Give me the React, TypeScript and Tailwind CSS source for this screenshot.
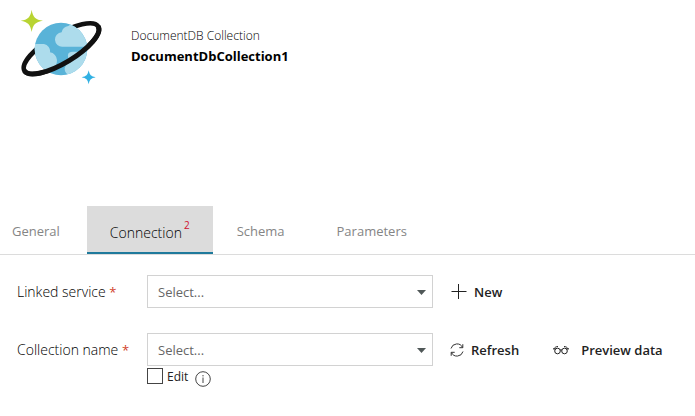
import type { ReactNode } from "react";

function CosmosLogo() {
  return (
    <svg width="100" height="95" viewBox="0 0 300 285" aria-hidden="true">
      <defs>
        <clipPath id="planet">
          <circle cx="153" cy="147" r="79" />
        </clipPath>
      </defs>
      <ellipse cx="154" cy="146" rx="129" ry="43" transform="rotate(-31 154 146)" fill="none" stroke="#111" strokeWidth="14" />
      <circle cx="153" cy="147" r="79" fill="#59b3d8" />
      <g clipPath="url(#planet)" fill="#addcec">
        <path d="M158 140a21 21 0 0 1-3-43 24 24 0 0 1 20-19l20-14 50 30v46z" />
        <path d="M60 132h42a22 22 0 0 1 18 25 24 24 0 0 1 21 23c0 22-14 35-28 34H60z" />
        <path d="M174 164c1-7 7-9 14-9h50v70h-60c-12-4-14-12-14-20 2-10 8-16 18-17-6-8-9-14-8-24z" />
      </g>
      <path
        d="M25 146A129 43 0 0 0 283 146"
        transform="rotate(-31 154 146)"
        fill="none"
        stroke="#111"
        strokeWidth="15"
      />
      <path d="M65 29C69 52 76 59 99 62C76 66 69 73 65 96C61 73 54 66 32 62C54 59 61 52 65 29Z" fill="#b8d432" />
      <path d="M236 211C239 225 243 229 257 232C243 235 239 239 236 253C233 239 229 235 215 232C229 229 233 225 236 211Z" fill="#32b1e3" />
    </svg>
  );
}

function PlusIcon() {
  return (
    <svg width="16" height="16" viewBox="0 0 16 16" stroke="#222" fill="none" aria-hidden="true">
      <path d="M.5 7.5h15M7.5 0v15" />
    </svg>
  );
}

function RefreshIcon() {
  return (
    <svg width="14" height="14" viewBox="0 0 14 14" stroke="#333" fill="none" aria-hidden="true">
      <path d="M1 5.5A6.2 6.2 0 0 1 12.6 4.5M13 8.5A6.2 6.2 0 0 1 1.4 9.5M12.8 1.2v3.5H9.3M1.2 12.8V9.3h3.5" />
    </svg>
  );
}

function GlassesIcon() {
  return (
    <svg width="16" height="12" viewBox="0 0 16 12" stroke="#222" fill="none" aria-hidden="true">
      <circle cx="4.5" cy="7" r="2.8" />
      <circle cx="11.5" cy="7" r="2.8" />
      <path d="M7 6.2c.6-.5 1.4-.5 2 0M0 4.9h2.8M13.2 4.9H16M.9 4.8C1.8 3.4 3 2.6 5 2.5M15.1 4.8C14.2 3.4 13 2.6 11 2.5" />
    </svg>
  );
}

function InfoIcon() {
  return (
    <svg width="16" height="16" viewBox="0 0 16 16" fill="none" stroke="#444" role="img" aria-label="Info">
      <circle cx="8" cy="8" r="7.3" />
      <path d="M8 6.5V12M8 4v1.4" />
    </svg>
  );
}

function Tab({ className, selected = false, children }: { className: string; selected?: boolean; children: ReactNode }) {
  const look = selected
    ? "border-b-2 border-[#1f7a9c] bg-[#dcdcdc] pt-2 text-[14px] font-light text-black"
    : "pt-[2px] text-[#858585]";
  return (
    <button type="button" role="tab" aria-selected={selected} className={`flex h-12 items-center ${look} ${className}`}>
      {children}
    </button>
  );
}

function Label({ htmlFor, children }: { htmlFor: string; children: ReactNode }) {
  return (
    <label htmlFor={htmlFor} className="text-[14px] font-light whitespace-nowrap text-black">
      {children} <span className="text-[13px] font-normal text-[#d13f2a]">*</span>
    </label>
  );
}

function Select({ id }: { id: string }) {
  return (
    <div className="relative">
      <select id={id} className="block h-[33px] w-full appearance-none border border-[#d2d2d2] bg-white px-[10px] text-[#666] outline-none">
        <option>Select...</option>
      </select>
      <svg width="9" height="5" viewBox="0 0 9 5" className="pointer-events-none absolute top-[15px] right-[7px]" fill="#505858" aria-hidden="true">
        <path d="M0 0h9L4.5 5z" />
      </svg>
    </div>
  );
}

export default function App() {
  return (
    <main className="bg-white font-['Open_Sans','Noto_Sans',sans-serif] text-[13px] leading-5 text-[#222]">
      <header className="flex h-[206px] items-start pl-[10px]">
        <CosmosLogo />
        <div className="pt-[26px] pl-[21px]">
          <p className="text-[12px] font-light text-black">DocumentDB Collection</p>
          <h1 className="text-[13px] font-bold text-black">DocumentDbCollection1</h1>
        </div>
      </header>

      <div role="tablist" className="flex border-b border-[#dcdcdc]">
        <Tab className="pr-[27px] pl-3">General</Tab>
        <Tab className="px-[23px]" selected>
          Connection<sup className="-top-2 ml-[2px] text-[10px] font-normal text-[#d0102f]">2</sup>
        </Tab>
        <Tab className="px-6">Schema</Tab>
        <Tab className="px-7">Parameters</Tab>
      </div>

      <form className="grid grid-cols-[130px_minmax(0,286px)_auto] items-center pt-5 pl-[17px]">
        <Label htmlFor="linked-service">Linked service</Label>
        <Select id="linked-service" />
        <div className="flex pl-[18px] font-semibold">
          <button type="button" className="flex items-center gap-[7px]">
            <PlusIcon />
            New
          </button>
        </div>

        <div className="col-span-3 h-[25px]" />

        <Label htmlFor="collection-name">Collection name</Label>
        <Select id="collection-name" />
        <div className="flex gap-[34px] pl-[17px] font-semibold whitespace-nowrap">
          <button type="button" className="flex items-center gap-[7px]">
            <RefreshIcon />
            Refresh
          </button>
          <button type="button" className="flex items-center gap-3">
            <GlassesIcon />
            Preview data
          </button>
        </div>

        <div className="col-start-2 flex items-start pt-[2px]">
          <label className="flex items-start gap-1 text-[12px] leading-[17px]">
            <input type="checkbox" className="size-4 appearance-none border border-[#444] bg-white checked:bg-[#1f7a9c]" />
            Edit
          </label>
          <span className="pt-[3px] pl-[7px]">
            <InfoIcon />
          </span>
        </div>
      </form>
    </main>
  );
}
